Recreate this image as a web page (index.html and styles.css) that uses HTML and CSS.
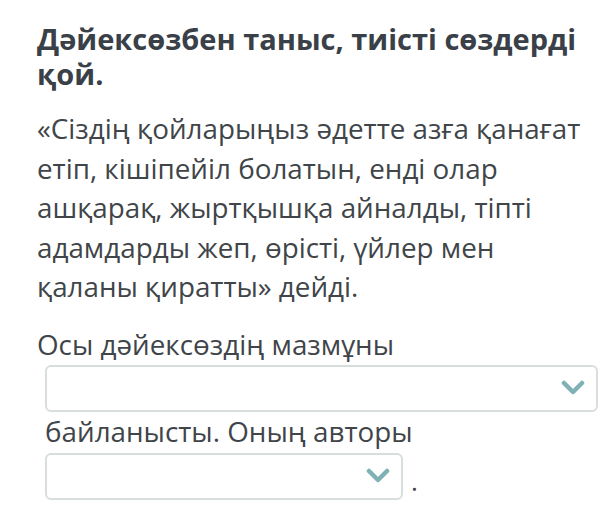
FILE: index.html
```html
<!DOCTYPE html>
<html lang="kk">
<head>
  <meta charset="UTF-8">
  <meta name="viewport" content="width=device-width, initial-scale=1.0">
  <title>Дәйексөз</title>
  <link rel="stylesheet" href="styles.css">
</head>
<body>
  <div class="question">
    <h2>Дәйексөзбен таныс, тиісті сөздерді қой.</h2>
    <p class="quote">«Сіздің қойларыңыз әдетте азға қанағат етіп, кішіпейіл болатын, енді олар ашқарақ, жыртқышқа айналды, тіпті адамдарды жеп, өрісті, үйлер мен қаланы қиратты» дейді.</p>

    <div class="answer">
      <div class="text-line first">Осы дәйексөздің мазмұны</div>
      <div class="select wide">
        <svg class="chevron" viewBox="0 0 24 16" width="24" height="16">
          <path d="M3 3 L12 12 L21 3" fill="none" stroke="#7fb1b6" stroke-width="4.5" stroke-linecap="round" stroke-linejoin="round"/>
        </svg>
      </div>
      <div class="text-line indent">байланысты. Оның авторы</div>
      <div class="select-row">
        <div class="select narrow">
          <svg class="chevron" viewBox="0 0 24 16" width="24" height="16">
            <path d="M3 3 L12 12 L21 3" fill="none" stroke="#7fb1b6" stroke-width="4.5" stroke-linecap="round" stroke-linejoin="round"/>
          </svg>
        </div>
        <span class="dot">.</span>
      </div>
    </div>
  </div>
</body>
</html>
```

FILE: styles.css
```css
* {
  box-sizing: border-box;
  margin: 0;
  padding: 0;
  font-family: 'Open Sans', 'Noto Sans', sans-serif;
}

body {
  background-color: #fff;
  color: #404549;
}

.question {
  padding: 21px 25px 0 37px;
}

.question h2 {
  font-size: 29px;
  font-weight: 700;
  line-height: 35px;
  color: #3a4047;
}

.quote {
  font-size: 27.8px;
  line-height: 39.5px;
  margin-top: 18px;
}

.text-line {
  font-size: 27.8px;
  line-height: 36px;
  white-space: nowrap;
}

.text-line.first {
  margin-top: 19px;
}

.text-line.indent {
  padding-left: 8px;
  margin-top: 1px;
}

.select {
  height: 47px;
  border: 2px solid #d8dede;
  border-radius: 6px;
  background-color: #fff;
  display: flex;
  align-items: center;
  justify-content: flex-end;
  padding-right: 11px;
}

.select.wide {
  width: 553px;
  margin: 3px 0 0 8px;
}

.select-row {
  display: flex;
  align-items: flex-end;
  margin: 4px 0 0 8px;
}

.select.narrow {
  width: 358px;
}

.dot {
  font-size: 26px;
  line-height: 26px;
  margin-left: 8px;
  padding-bottom: 6px;
}
```
